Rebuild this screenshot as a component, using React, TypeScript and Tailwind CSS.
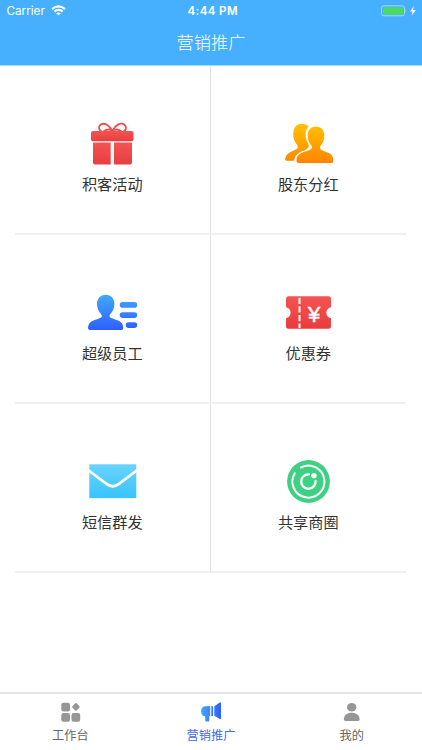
import { useState } from "react";
import type { ReactNode } from "react";
import { clsx } from "clsx";

function GiftIcon() {
	return (
		<svg width="51" height="50" viewBox="0 0 51 50" fill="none">
			<defs>
				<linearGradient id="gift" x1="0" y1="0" x2="0" y2="1">
					<stop stopColor="#f25553" />
					<stop offset="1" stopColor="#e83e3f" />
				</linearGradient>
			</defs>
			<path
				d="M14.500 13.500C11.500 11.500 11.300 8.500 13.500 6.700C17.500 3.800 22.500 7.500 25.300 13C28.100 7.500 33.500 3.800 37.500 6.700C39.700 8.500 39.500 11.500 36.500 13.500M16.500 13.500C19.500 11.200 22.500 10.800 25.300 13C28.100 10.800 31.500 11.200 34.500 13.500"
				stroke="#ee5150"
				strokeWidth="1.900"
			/>
			<rect x="4" y="13" width="42.500" height="10.300" rx="2" fill="url(#gift)" />
			<path d="M6 24.400H23.700V46.400H8Q6 46.400 6 44.400Z" fill="url(#gift)" />
			<path d="M27 24.400H45V44.400Q45 46.400 43 46.400H27Z" fill="url(#gift)" />
		</svg>
	);
}

function PartnersIcon() {
	return (
		<svg width="51" height="50" viewBox="0 0 51 50" fill="none">
			<defs>
				<linearGradient id="partners" gradientUnits="userSpaceOnUse" x1="0" y1="5" x2="0" y2="45">
					<stop stopColor="#ffc400" />
					<stop offset="1" stopColor="#ff8500" />
				</linearGradient>
			</defs>
			<path
				d="M18.500 5.700C21.500 5.700 24 6.700 25.600 8.800C22.800 11.300 22.200 15 22.700 18.500C23.100 22 24.800 24.500 25.700 27C26.300 29.500 24 31.300 20.500 32.700C15.500 34.600 11.800 37 11.200 42.700H3.500C2.300 42.700 1.900 41.800 2.200 40.500C3 36.500 5.500 34.700 9 33.200C12 32 14.800 31 14.800 29C14.800 27.300 12.500 25.300 11.300 22.300C9.700 18 9.900 13 11.800 9.600C13.200 7.100 15.500 5.700 18.500 5.700Z"
				fill="url(#partners)"
			/>
			<path
				d="M33 8.500C38.200 8.500 41.300 12 41.300 17.500C41.300 22 39.800 25 37.800 27.300C36.200 29.300 36.800 31.200 39 32.300C42 33.800 46 34.300 48.300 36.800C50 38.700 50.300 41 50.300 43.200Q50.300 45 48.500 45H15.300Q13.600 45 13.500 43.200C13.300 40.500 14 38.500 15.700 36.800C18 34.300 23 33.500 26.500 32C29 31 29.800 29.200 28.200 27.300C26 25 24.700 22 24.700 17.500C24.700 12 27.800 8.500 33 8.500Z"
				fill="url(#partners)"
			/>
		</svg>
	);
}

function StaffIcon() {
	return (
		<svg width="51" height="50" viewBox="0 0 51 50">
			<defs>
				<linearGradient id="staff" gradientUnits="userSpaceOnUse" x1="0" y1="8" x2="0" y2="43">
					<stop stopColor="#40a9fb" />
					<stop offset="1" stopColor="#2f60ff" />
				</linearGradient>
			</defs>
			<g fill="url(#staff)">
				<path d="M18.700 7.800C24 7.800 27.400 11.600 27.400 17C27.400 21 25.800 24.500 23.400 27C22 28.600 22.200 30 24.300 31C28 32.700 33.500 33.300 35.300 37C36 38.600 36.300 40 36.300 41Q36.300 43 34.300 43H3Q1 43 1 41C1 39.700 1.300 38.300 2 37C4 33.300 9.500 32.700 13 31C15.200 30 15.400 28.600 14 27C11.600 24.500 10 21 10 17C10 11.600 13.400 7.800 18.700 7.800Z" />
				<rect x="32.700" y="15" width="17.500" height="5.700" rx="2.800" />
				<rect x="32.700" y="25.300" width="17.500" height="5.600" rx="2.800" />
				<rect x="38.700" y="35.300" width="11.500" height="5.600" rx="2.800" />
			</g>
		</svg>
	);
}

function CouponIcon() {
	return (
		<svg width="51" height="50" viewBox="0 0 51 50">
			<defs>
				<linearGradient id="coupon" x1="0" y1="0" x2="0" y2="1">
					<stop stopColor="#f45452" />
					<stop offset="1" stopColor="#e83c3e" />
				</linearGradient>
			</defs>
			<path
				d="M5.500 9.300H45.500Q48 9.300 48 11.800V20.300C41.800 21.300 41.800 30.300 48 31.300V39.300Q48 41.800 45.500 41.800H5.500Q3 41.800 3 39.300V31.300C9.200 30.300 9.200 21.300 3 20.300V11.800Q3 9.300 5.500 9.300Z"
				fill="url(#coupon)"
			/>
			<path d="M16.500 10.700V41" stroke="#fff" strokeWidth="2" strokeDasharray="6.300 2.300" />
			<text
				x="31.200"
				y="34.500"
				textAnchor="middle"
				fill="#fff"
				stroke="#fff"
				strokeWidth="0.500"
				className="font-['Liberation_Sans',sans-serif] text-[22px]"
			>
				¥
			</text>
		</svg>
	);
}

function MailIcon() {
	return (
		<svg width="51" height="50" viewBox="0 0 51 50">
			<defs>
				<linearGradient id="mail" x1="0" y1="0" x2="0" y2="1">
					<stop stopColor="#6ad3fd" />
					<stop offset="1" stopColor="#38c4fd" />
				</linearGradient>
			</defs>
			<rect x="2.300" y="8.300" width="47" height="33.800" fill="url(#mail)" />
			<path d="M1 14L19.500 27.800Q25.700 32.700 31.900 27.800L50.500 14" fill="none" stroke="#fff" strokeWidth="2.800" />
		</svg>
	);
}

function CircleIcon() {
	return (
		<svg width="51" height="50" viewBox="0 0 51 50" fill="none" stroke="#fff" strokeLinecap="round">
			<circle cx="25.500" cy="25.500" r="21.400" fill="#3ed184" stroke="none" />
			<path d="M18 11.500A16 16 0 1 1 11.800 17.300" strokeWidth="2" />
			<path d="M26 18.400A7.200 7.200 0 1 0 32.600 25" strokeWidth="2.300" />
			<circle cx="31" cy="19.800" r="2.700" fill="#fff" stroke="none" />
		</svg>
	);
}

function WorkbenchIcon() {
	return (
		<svg width="24" height="24" viewBox="0 0 24 24" fill="#969696">
			<rect x="3.300" y="2.800" width="8.700" height="8.700" rx="2" />
			<rect x="3.300" y="13.100" width="8.700" height="8.700" rx="2" />
			<rect x="13.500" y="13.100" width="8.700" height="8.700" rx="2" />
			<rect x="14.900" y="3.900" width="6" height="6" rx="1" transform="rotate(45 17.900 6.900)" />
		</svg>
	);
}

function MegaphoneIcon() {
	return (
		<svg width="24" height="24" viewBox="0 0 24 24">
			<defs>
				<linearGradient id="megaphone" gradientUnits="userSpaceOnUse" x1="2" y1="0" x2="22" y2="0">
					<stop stopColor="#44a6ff" />
					<stop offset="1" stopColor="#2e5eff" />
				</linearGradient>
			</defs>
			<g fill="url(#megaphone)">
				<path d="M5.500 6.200H10.300V20.400Q10.300 21.600 9.200 21.600H7.300Q6.200 21.600 6.200 20.400V16.200H5.500C1 15.500 1 7 5.500 6.200Z" />
				<rect x="9" y="6.200" width="2.200" height="9.800" />
				<rect x="12.300" y="6.200" width="1.800" height="9.800" />
				<path d="M15.300 6.200L20.800 2.500Q22 1.800 22 3.300V18.300Q22 19.800 20.800 19L15.300 15.800Z" />
			</g>
		</svg>
	);
}

function ProfileIcon() {
	return (
		<svg width="24" height="24" viewBox="0 0 24 24" fill="#969696">
			<ellipse cx="11.700" cy="7.200" rx="4.700" ry="4.300" />
			<path d="M3.900 19.500C3.900 14.800 7.200 12.700 11.700 12.700S19.600 14.800 19.600 19.500Q19.600 20.900 18.100 20.900H5.400Q3.900 20.900 3.900 19.500Z" />
		</svg>
	);
}

const FEATURES: { label: string; icon: ReactNode }[] = [
	{ label: "积客活动", icon: <GiftIcon /> },
	{ label: "股东分红", icon: <PartnersIcon /> },
	{ label: "超级员工", icon: <StaffIcon /> },
	{ label: "优惠券", icon: <CouponIcon /> },
	{ label: "短信群发", icon: <MailIcon /> },
	{ label: "共享商圈", icon: <CircleIcon /> },
];

const TABS: { value: string; label: string; icon: ReactNode }[] = [
	{ value: "workbench", label: "工作台", icon: <WorkbenchIcon /> },
	{ value: "marketing", label: "营销推广", icon: <MegaphoneIcon /> },
	{ value: "mine", label: "我的", icon: <ProfileIcon /> },
];

function StatusBar() {
	return (
		<div className="grid h-[22px] grid-cols-3 items-center pl-[6.500px] pr-[5px] text-[11.500px] leading-none">
			<div className="flex items-center gap-[6px]">
				<span className="pt-[2px] text-[11.700px]">Carrier</span>
				<svg width="15" height="11" viewBox="0 0 15 11" fill="none" stroke="#fff" strokeWidth="2.200">
					<path d="M1 4.200Q7.500 -1.400 14 4.200" />
					<path d="M3.400 6.700Q7.500 3.200 11.600 6.700" />
					<path d="M5.200 8.300Q7.500 6.500 9.800 8.300L7.500 10.600Z" fill="#fff" stroke="none" />
				</svg>
			</div>
			<span className="pl-[2px] pt-px text-center font-semibold tracking-[0.400px]">4:44 PM</span>
			<div className="flex justify-end">
				<svg width="36" height="12" viewBox="0 0 36 12">
					<rect x="0.500" y="0.800" width="23" height="10" rx="2.300" fill="none" stroke="#a3d7ff" />
					<rect x="2" y="2.200" width="20" height="7.200" rx="1" fill="#4cd964" />
					<path d="M24.700 4.300Q26.400 5.800 24.700 7.300Z" fill="#a3d7ff" />
					<path d="M32.800 1L29 6.500H31.600L30.500 10.800L34.800 5H32Z" fill="#fff" />
				</svg>
			</div>
		</div>
	);
}

export default function App() {
	const [active, setActive] = useState("marketing");

	return (
		<div className="flex h-[750px] w-[422px] flex-col overflow-hidden bg-white font-['Inter','Noto_Sans_CJK_SC',sans-serif]">
			<header className="h-[66px] shrink-0 border-b border-[#a8d9ff] bg-[#46b0ff] text-white">
				<StatusBar />
				<h1 className="text-center text-[17.200px] font-light leading-[42px]">营销推广</h1>
			</header>

			<main className="flex-1 pl-[15px] pr-[16px]">
				<div className="grid grid-cols-2">
					{FEATURES.map((item) => (
						<button
							key={item.label}
							type="button"
							className="flex h-[169px] flex-col items-center border-r border-b-2 border-r-[#e3e3e3] border-b-[#f0f0f0] pt-[52px] text-[15.200px] text-[#333] even:border-r-0"
						>
							{item.icon}
							<span className="mt-[5px] leading-[23px]">{item.label}</span>
						</button>
					))}
				</div>
			</main>

			<nav className="grid h-[58px] shrink-0 grid-cols-3 border-t-2 border-[#e3e3e3]">
				{TABS.map((tab) => (
					<button
						key={tab.value}
						type="button"
						onClick={() => setActive(tab.value)}
						className={clsx(
							"flex flex-col items-center pt-[6px] text-[12.200px]",
							active === tab.value ? "text-[#3b6cf0]" : "text-[#666]",
						)}
					>
						{tab.icon}
						<span className="mt-[3px] leading-[18px]">{tab.label}</span>
					</button>
				))}
			</nav>
		</div>
	);
}
